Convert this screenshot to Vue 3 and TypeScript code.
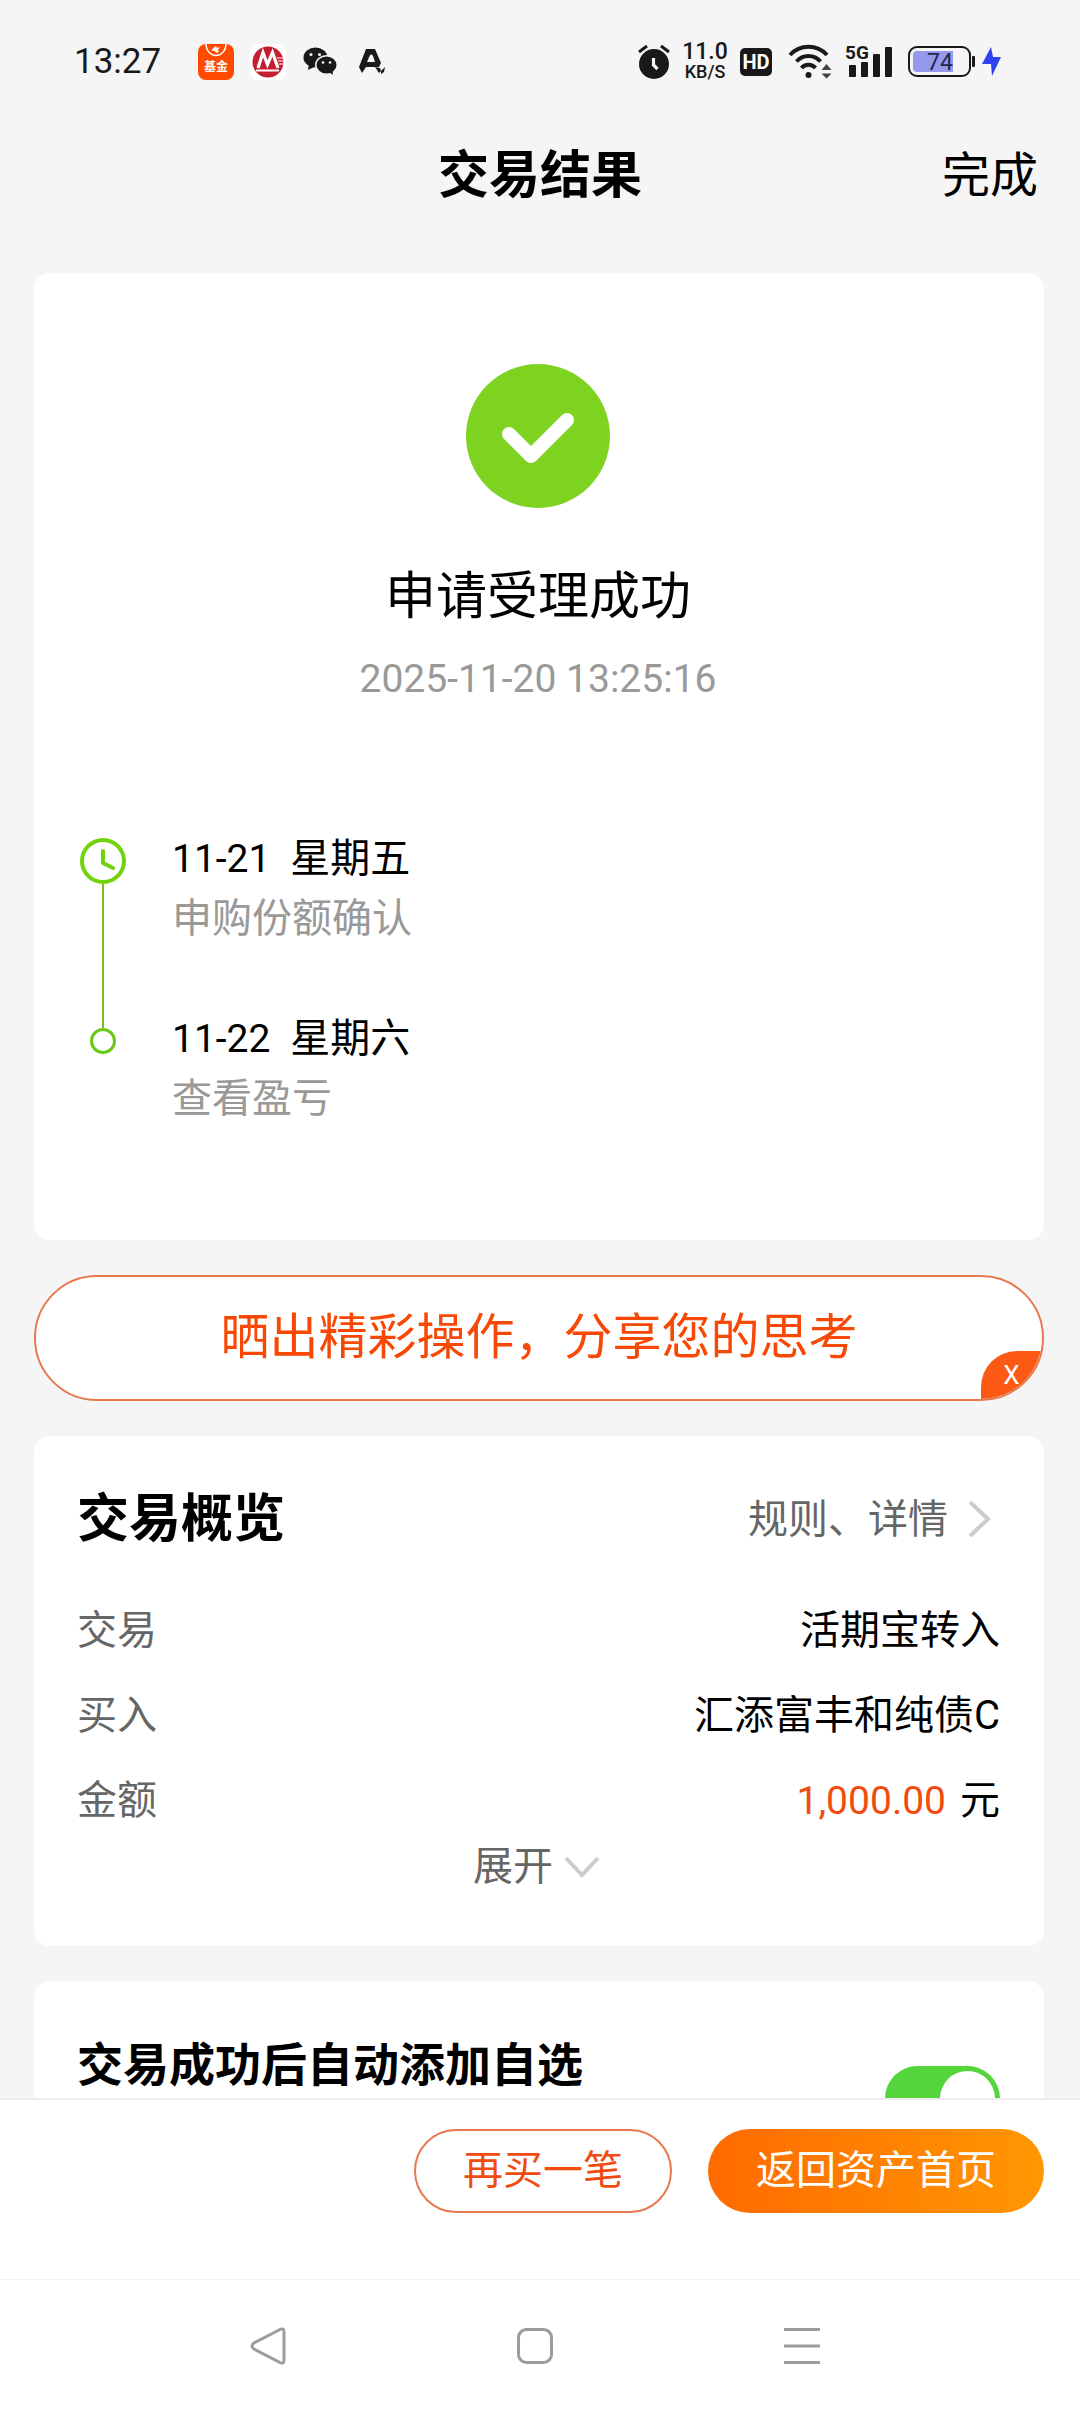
<script setup lang="ts">
import { ref } from 'vue'

interface Step {
  date: string
  weekday: string
  note: string
}

const steps: Step[] = [
  { date: '11-21', weekday: '星期五', note: '申购份额确认' },
  { date: '11-22', weekday: '星期六', note: '查看盈亏' },
]

const autoWatch = ref(true)
const shareVisible = ref(true)
</script>

<template>
  <div class="app">
    <div class="status">
      <div class="status-left">
        <span class="clock">13:27</span>
        <svg width="36" height="36" viewBox="0 0 36 36" aria-hidden="true">
          <rect width="36" height="36" rx="8" fill="#ff4a00" />
          <path d="M8 0a10 11.500 0 0 0 20 0" fill="none" stroke="#fff" stroke-width="1.400" />
          <path d="M14 5l4-3 1 2 3-1-2 3 1 2-3 1-1-2-3-.5z" fill="#fff" />
          <text x="18" y="27" class="fund-label">基金</text>
        </svg>
        <svg width="36" height="36" viewBox="0 0 36 36" aria-hidden="true">
          <rect width="36" height="36" rx="8" fill="#fff" />
          <circle cx="18" cy="18" r="15.500" fill="#c41e30" />
          <path d="M8 24l5-15.500 4.500 12 5-12L28 24" fill="none" stroke="#fff" stroke-width="3.200" />
          <path d="M6 26.500h23" stroke="#fff" stroke-width="2" />
          <path d="M27 14h7M28 17h7M29 20h6" stroke="#fff" stroke-width="1.200" />
        </svg>
        <svg width="36" height="36" viewBox="0 0 36 36" aria-hidden="true">
          <ellipse cx="13.500" cy="13.500" rx="12" ry="10" fill="#191919" />
          <path d="M7 20l-1 6 6-3z" fill="#191919" />
          <ellipse cx="24.500" cy="21" rx="11.500" ry="10" fill="#f5f5f5" />
          <ellipse cx="24.500" cy="21" rx="10" ry="8.600" fill="#191919" />
          <path d="M27 28l4 3-.5-5z" fill="#191919" />
          <g fill="#f5f5f5">
            <circle cx="9" cy="10.500" r="1.500" />
            <circle cx="17.500" cy="10.500" r="1.500" />
            <circle cx="21" cy="18.500" r="1.300" />
            <circle cx="28" cy="18.500" r="1.300" />
          </g>
        </svg>
        <svg width="36" height="36" viewBox="0 0 36 36" aria-hidden="true">
          <path
            fill="#191919"
            fill-rule="evenodd"
            d="M12 5h9l6 14-2 4H12l-4 6-3-6zM16 11l-3 7h8l-2-6a2 2 0 0 0-3-1z"
          />
          <path d="M21 23l4 6 2-2-1-3zM27 27l4-4-1 5-3 2z" fill="#191919" />
        </svg>
      </div>
      <div class="status-right">
        <svg width="32" height="36" viewBox="0 0 32 36" aria-hidden="true">
          <circle cx="16" cy="20" r="15" fill="#191919" />
          <path d="M1 8l8-6M31 8l-8-6" stroke="#191919" stroke-width="3" />
          <path d="M15.500 14v7l4 4" fill="none" stroke="#f5f5f5" stroke-width="3.200" />
        </svg>
        <div class="net">
          <span class="net-value">11.0</span>
          <span class="net-unit">KB/S</span>
        </div>
        <svg width="35" height="28" viewBox="0 0 35 28" aria-hidden="true">
          <rect width="32" height="28" rx="5" fill="#191919" />
          <text x="16" y="21" class="hd-label">HD</text>
        </svg>
        <svg width="44" height="36" viewBox="0 0 44 36" aria-hidden="true">
          <g fill="none" stroke="#191919" stroke-width="4">
            <path d="M2 11a25 25 0 0 1 37 0" />
            <path d="M8.500 17.500a16 16 0 0 1 24 0" />
            <path d="M13.500 24a9 9 0 0 1 14 0" />
          </g>
          <circle cx="20.500" cy="31" r="3" fill="#191919" />
          <path d="M33.500 26l5-6 5 6zM33.500 29.500l5 5 5-5z" fill="#444" />
        </svg>
        <svg width="50" height="46" viewBox="0 -5 50 46" aria-hidden="true">
          <text x="0" y="15" class="g-label">5G</text>
          <g fill="#191919">
            <rect x="4" y="21" width="7" height="12" rx="1" />
            <rect x="16" y="18" width="7" height="15" rx="1" />
            <rect x="28" y="10" width="7" height="23" rx="1" />
            <rect x="40" y="3" width="7" height="30" rx="1" />
          </g>
        </svg>
        <div class="power">
          <svg width="67" height="32" viewBox="0 0 67 32" aria-hidden="true">
            <rect x="1" y="1" width="61" height="29" rx="8" fill="none" stroke="#191919" stroke-width="2" />
            <path d="M9 5h36v21H9a4 4 0 0 1-4-4V9a4 4 0 0 1 4-4z" fill="#9499ec" />
            <rect x="64" y="10" width="3" height="11" rx="1" fill="#191919" />
            <text x="32" y="24" class="battery-label">74</text>
          </svg>
          <svg width="20" height="32" viewBox="0 0 20 32" aria-hidden="true">
            <path d="M9 1l-9 17h9l1 12 9-19h-8z" fill="#2f42f0" />
          </svg>
        </div>
      </div>
    </div>

    <header class="header">
      <h1>交易结果</h1>
      <button type="button" class="done">完成</button>
    </header>

    <main class="content">
      <section class="card result">
        <svg width="144" height="144" viewBox="0 0 144 144" aria-hidden="true">
          <circle cx="72" cy="72" r="72" fill="#7ed321" />
          <path
            d="M43 70l22 22 36-36"
            fill="none"
            stroke="#fff"
            stroke-width="14"
            stroke-linecap="round"
            stroke-linejoin="round"
          />
        </svg>
        <h2 class="result-title">申请受理成功</h2>
        <time class="result-time">2025-11-20 13:25:16</time>
        <ol class="steps">
          <li v-for="(step, i) in steps" :key="step.date" class="step">
            <div class="marker">
              <svg v-if="i === 0" width="46" height="46" viewBox="0 0 46 46" aria-hidden="true">
                <circle cx="23" cy="23" r="21" fill="none" stroke="#72d30b" stroke-width="4" />
                <path
                  d="M23 13v12l10 5"
                  fill="none"
                  stroke="#72d30b"
                  stroke-width="4"
                  stroke-linecap="round"
                  stroke-linejoin="round"
                />
              </svg>
              <span v-else class="dot"></span>
              <span v-if="i < steps.length - 1" class="line"></span>
            </div>
            <div>
              <div><span class="num">{{ step.date }}</span>&nbsp; {{ step.weekday }}</div>
              <div class="step-note">{{ step.note }}</div>
            </div>
          </li>
        </ol>
      </section>

      <div v-if="shareVisible" class="share">
        <button type="button" class="share-main">晒出精彩操作，分享您的思考</button>
        <button type="button" class="share-close" aria-label="关闭" @click="shareVisible = false">X</button>
      </div>

      <section class="card overview">
        <div class="overview-head">
          <h2>交易概览</h2>
          <a href="#" class="detail">
            规则、详情
            <svg width="24" height="40" viewBox="0 0 24 40" aria-hidden="true">
              <path d="M2 2l18 17L2 36" fill="none" stroke="#ccc" stroke-width="4" />
            </svg>
          </a>
        </div>
        <dl class="rows">
          <div class="row">
            <dt>交易</dt>
            <dd>活期宝转入</dd>
          </div>
          <div class="row">
            <dt>买入</dt>
            <dd>汇添富丰和纯债C</dd>
          </div>
          <div class="row">
            <dt>金额</dt>
            <dd><span class="num amount">1,000.00</span>元</dd>
          </div>
        </dl>
        <button type="button" class="expand">
          展开
          <svg width="36" height="24" viewBox="0 0 36 24" aria-hidden="true">
            <path d="M2 3l16 17L34 3" fill="none" stroke="#ccc" stroke-width="4" />
          </svg>
        </button>
      </section>

      <section class="card auto">
        <label for="auto-watch">交易成功后自动添加自选</label>
        <input id="auto-watch" v-model="autoWatch" type="checkbox" role="switch" class="switch" />
      </section>
    </main>

    <footer class="actions">
      <button type="button" class="action outline">再买一笔</button>
      <button type="button" class="action primary">返回资产首页</button>
    </footer>

    <nav class="sysnav">
      <button type="button" aria-label="返回">
        <svg width="36" height="38" viewBox="0 0 36 38" aria-hidden="true">
          <path
            d="M29 3Q34 0 34 5V33Q34 38 29 35L4 22Q0 19 4 16Z"
            fill="none"
            stroke="#9c9c9c"
            stroke-width="3"
          />
        </svg>
      </button>
      <button type="button" aria-label="主页">
        <svg width="36" height="36" viewBox="0 0 36 36" aria-hidden="true">
          <rect x="1.500" y="1.500" width="33" height="33" rx="8" fill="none" stroke="#9c9c9c" stroke-width="3" />
        </svg>
      </button>
      <button type="button" aria-label="最近任务">
        <svg width="36" height="36" viewBox="0 0 36 36" aria-hidden="true">
          <path d="M0 1.500h36M0 18h36M0 34.500h36" stroke="#9c9c9c" stroke-width="3" />
        </svg>
      </button>
    </nav>
  </div>
</template>

<style>
body {
  background: #f5f5f5;
}
</style>

<style scoped>
.app {
  display: flex;
  flex-direction: column;
  height: 100vh;
  background: #f5f5f5;
  color: #000;
  font-family: Roboto, 'Noto Sans CJK SC', sans-serif;
  font-size: 40px;
  line-height: 60px;
}

.app * {
  box-sizing: border-box;
}

svg {
  display: block;
  flex: none;
}

h1,
h2,
dl,
dd,
ol {
  margin: 0;
  padding: 0;
}

button {
  padding: 0;
  border: 0;
  background: none;
  color: inherit;
  font: inherit;
  cursor: pointer;
}

.num {
  font-size: 39px;
}

.status {
  display: flex;
  flex: none;
  align-items: center;
  justify-content: space-between;
  height: 124px;
  padding: 0 78px 0 74px;
  color: #191919;
}

.status-left {
  display: flex;
  align-items: center;
  gap: 16px;
}

.clock {
  width: 108px;
  font-size: 35px;
}

.status-right {
  display: flex;
  align-items: center;
  gap: 13px;
}

.net {
  display: flex;
  flex-direction: column;
  align-items: center;
  width: 44px;
  font-weight: 500;
  line-height: 20px;
  white-space: nowrap;
}

.net-value {
  font-size: 23px;
}

.net-unit {
  font-size: 18px;
}

.power {
  display: flex;
  gap: 7px;
}

.fund-label {
  fill: #fff;
  font-size: 12px;
  font-weight: 700;
  text-anchor: middle;
}

.hd-label {
  fill: #fff;
  font-size: 20px;
  font-weight: 700;
  text-anchor: middle;
}

.g-label {
  fill: #191919;
  font-size: 19px;
  font-weight: 700;
}

.battery-label {
  fill: #26264a;
  font-size: 23px;
  text-anchor: middle;
}

.header {
  display: grid;
  flex: none;
  grid-template-columns: 1fr auto 1fr;
  align-items: center;
  height: 104px;
  padding: 0 42px;
}

.header h1 {
  grid-column: 2;
  font-size: 51px;
  font-weight: 700;
}

.done {
  justify-self: end;
  font-size: 48px;
}

.content {
  display: flex;
  flex: 1;
  flex-direction: column;
  gap: 35px;
  min-height: 0;
  padding: 45px 36px 36px 34px;
  overflow-y: auto;
  scrollbar-width: none;
}

.card {
  flex: none;
  border-radius: 16px;
  background: #fff;
}

.result {
  display: flex;
  flex-direction: column;
  align-items: center;
  padding: 91px 46px 111px 44px;
}

.result-title {
  margin-top: 59px;
  font-size: 51px;
  font-weight: 400;
}

.result-time {
  margin-top: 22px;
  color: #999;
  font-size: 39px;
}

.steps {
  align-self: stretch;
  margin-top: 120px;
  list-style: none;
}

.step {
  display: flex;
  gap: 44px;
}

.step + .step {
  margin-top: 60px;
}

.marker {
  position: relative;
  display: flex;
  flex: none;
  justify-content: center;
  width: 50px;
  padding-top: 9px;
}

.dot {
  width: 26px;
  height: 26px;
  margin-top: 10px;
  border: 3px solid #6ac815;
  border-radius: 50%;
}

.line {
  position: absolute;
  top: 55px;
  left: 24px;
  width: 2px;
  height: 144px;
  background: #70c02c;
}

.step-note {
  color: #999;
}

.share {
  position: relative;
  flex: none;
  border: 2px solid #e8794f;
  border-radius: 63px;
  background: #fff;
  overflow: hidden;
}

.share-main {
  display: block;
  width: 100%;
  height: 122px;
  color: #f74806;
  font-size: 49px;
}

.share-close {
  position: absolute;
  right: 0;
  bottom: 0;
  width: 61px;
  height: 48px;
  border-radius: 36px 0 0;
  background: #fb5914;
  color: #fff;
  font-size: 26px;
  line-height: 48px;
}

.overview {
  padding: 54px 44px 49px 43px;
}

.overview-head {
  display: flex;
  align-items: center;
  justify-content: space-between;
  padding-right: 8px;
}

.overview-head h2 {
  font-size: 52px;
  font-weight: 700;
}

.detail {
  display: flex;
  align-items: center;
  gap: 20px;
  color: #666;
  text-decoration: none;
}

.rows {
  margin-top: 38px;
}

.row {
  display: flex;
  justify-content: space-between;
  line-height: 85px;
}

dt {
  color: #666;
}

.amount {
  margin-right: 14px;
  color: #f04c10;
}

.expand {
  display: flex;
  align-items: center;
  gap: 11px;
  margin: -7px auto 0;
  padding-right: 4px;
  color: #666;
}

.auto {
  display: flex;
  align-items: center;
  justify-content: space-between;
  min-height: 234px;
  padding: 54px 44px 54px 43px;
}

.auto label {
  align-self: flex-start;
  font-size: 46px;
  font-weight: 700;
}

.switch {
  flex: none;
  width: 115px;
  height: 65px;
  margin: 0;
  padding: 5px;
  border-radius: 33px;
  background: #ddd;
  appearance: none;
}

.switch::before {
  display: block;
  width: 55px;
  height: 55px;
  border-radius: 50%;
  background: #fff;
  content: '';
}

.switch:checked {
  background: #54d53b;
}

.switch:checked::before {
  margin-left: auto;
}

.actions {
  display: flex;
  flex: none;
  justify-content: flex-end;
  gap: 36px;
  padding: 29px 36px 66px;
  border-top: 2px solid #ececec;
  background: #fff;
}

.action {
  height: 84px;
  padding: 0 48px;
  border-radius: 42px;
}

.outline {
  padding: 0 47px;
  border: 2px solid #e8794f;
  color: #f04c10;
}

.primary {
  background: linear-gradient(90deg, #ff6a00, #ff9702);
  color: #fff;
}

.sysnav {
  display: grid;
  flex: none;
  grid-template-columns: repeat(3, 1fr);
  height: 133px;
  padding: 0 144px 0 134px;
  border-top: 1px solid #f0f0f0;
  background: #fff;
}

.sysnav button {
  display: flex;
  align-items: center;
  justify-content: center;
}
</style>
